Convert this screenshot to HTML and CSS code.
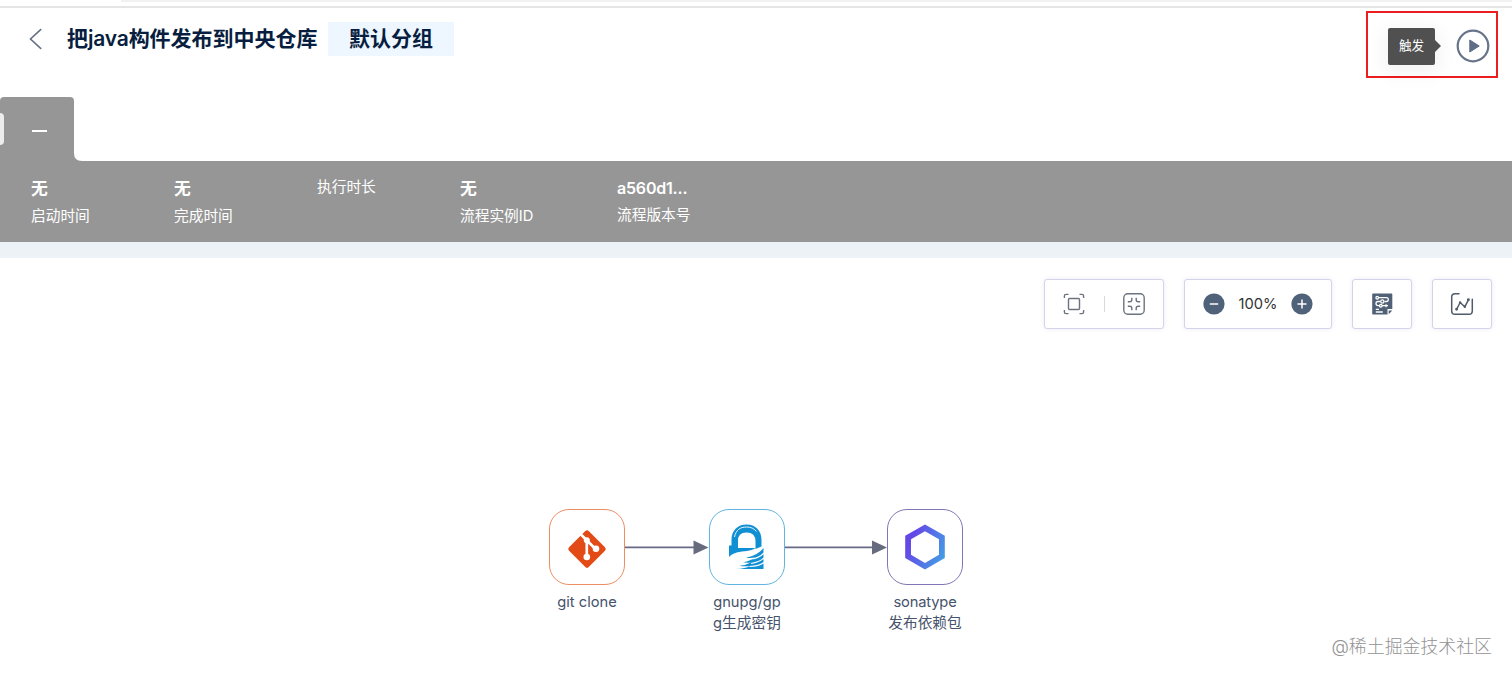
FILE: index.html
```html
<!DOCTYPE html>
<html lang="zh-CN">
<head>
<meta charset="utf-8">
<title>把java构件发布到中央仓库</title>
<link rel="stylesheet" href="styles.css">
</head>
<body>
<div class="browser-edge"><div class="browser-tab"></div></div>
<header class="header">
  <svg class="back" width="14" height="22" viewBox="0 0 14 22"><path d="M12.2 1.2 1.5 11l10.700 9.800" /></svg>
  <h1 class="title">把<span class="latin">java</span>构件发布到中央仓库</h1>
  <span class="group">默认分组</span>
  <div class="trigger">
    <span class="tooltip">触发</span>
    <svg class="play" width="34" height="34" viewBox="0 0 34 34"><circle cx="17" cy="17" r="15.300"/><path d="M13.800 11v12l9.400-6z"/></svg>
  </div>
</header>
<section class="summary">
  <div class="tab"><i class="handle"></i><i class="dash"></i><svg class="fillet" width="8" height="8" viewBox="0 0 8 8"><path d="M0 0v8h8Q0 8 0 0z"/></svg></div>
  <div class="info">
    <div class="item"><b>无</b><span>启动时间</span></div>
    <div class="item"><b>无</b><span>完成时间</span></div>
    <div class="item single"><span>执行时长</span></div>
    <div class="item wide"><b>无</b><span>流程实例ID</span></div>
    <div class="item version"><b>a560d1...</b><span>流程版本号</span></div>
  </div>
</section>
<main class="canvas">
  <div class="toolbar">
    <div class="tool pair">
      <svg width="22" height="22" viewBox="0 0 22 22" class="line"><rect x="5.500" y="5.500" width="11" height="11" rx="1"/><path d="M1.400 5V3q0-1.600 1.600-1.600h2.500M16.500 1.400H19q1.600 0 1.600 1.600v2M20.600 17v2q0 1.600-1.600 1.600h-2.500M5.500 20.600H3Q1.400 20.600 1.400 19v-2"/></svg>
      <i class="sep"></i>
      <svg width="22" height="22" viewBox="0 0 22 22" class="line"><rect x=".8" y=".8" width="20.400" height="20.400" rx="4"/><path d="M8.800 4.800v2q0 2-2 2h-2M13.200 4.800v2q0 2 2 2h2M4.800 13.200h2q2 0 2 2v2M17.200 13.200h-2q-2 0-2 2v2"/></svg>
    </div>
    <div class="tool zoom">
      <svg width="22" height="22" viewBox="0 0 22 22" class="disc"><circle cx="11" cy="11" r="10.600"/><path d="M6.800 11h8.400"/></svg>
      <span>100%</span>
      <svg width="22" height="22" viewBox="0 0 22 22" class="disc"><circle cx="11" cy="11" r="10.600"/><path d="M6.500 11h9M11 6.500v9"/></svg>
    </div>
    <div class="tool">
      <svg width="22" height="22" viewBox="0 0 22 22" class="sheet"><path class="page" d="M2 .4h18.500q.8 0 .8.800V16h-4.800v5.600H2q-.8 0-.8-.8V1.200q0-.8.8-.8z"/><path class="page" d="M17.700 17.400h3.600l-3.600 3.800z"/><circle cx="6.200" cy="4.700" r="1.300"/><path d="M7.500 4.700h8q1.800 0 1.800 1.900T15.500 8.500h-2M9 8.500H7q-2 0-2 2.100t2 2.100h1"/><circle cx="11.300" cy="8.500" r="1.600"/><circle cx="9.800" cy="12.700" r="1.300"/><path d="M11 12.700h6M15 11.200v3M4.800 16.300h3.200M4.800 19h7"/></svg>
    </div>
    <div class="tool">
      <svg width="24" height="24" viewBox="0 0 24 24" class="chart"><path d="M9 1.700H5Q1.700 1.700 1.700 5v14q0 3.300 3.300 3.300h14q3.300 0 3.300-3.300V7.200"/><path d="m6.800 17 3.300-6.500 4.700 4.300 3.600-7"/><circle cx="6.600" cy="17.200" r=".7"/><circle cx="10.100" cy="10.500" r=".5"/><circle cx="14.800" cy="14.800" r=".5"/><circle cx="18.400" cy="7.800" r=".7"/></svg>
    </div>
  </div>
  <svg class="links" width="300" height="20" viewBox="0 0 300 20">
    <path class="wire" d="M0 10.400h70M160 10.400h88"/>
    <path class="arrow" d="M69.500 3.400v14l15-7zM248 3.400v14l15-7z"/>
  </svg>
  <div class="node git">
    <div class="box"><svg width="40" height="40" viewBox="0 0 40 40"><rect x="6.100" y="6.100" width="27.800" height="27.800" rx="2.400" transform="rotate(45 20 20)" fill="#e24a16"/><g stroke="#fff" fill="none" stroke-width="2.700"><path d="m13 4.500 6.700 6.700M19.800 11v17M20 11.500l8.500 8.500"/></g><g fill="#fff"><circle cx="19.800" cy="11.300" r="3"/><circle cx="19.800" cy="28" r="3.300"/><circle cx="29" cy="19.800" r="3.300"/></g></svg></div>
    <p>git clone</p>
  </div>
  <div class="node gpg">
    <div class="box"><svg width="38" height="48" viewBox="0 0 38 48"><path fill="#118fd3" d="M3.500 24V17C3.500 7.500 9.500 1.500 18.500 1.500S33.500 7.500 33.500 17v6.500l-6 2.500v-7.500Q27.500 9.500 18.500 9.500T10 18.500V24z"/><path d="M6.500 14C8 7 12 4 18.500 4q6.500 0 10 4.500" fill="none" stroke="#fff" stroke-width=".9"/><path fill="#118fd3" d="M1 22.500h9v2.500h17.500q-3 2.500-13.500 3.500Q4.500 29.500 1 34z"/><path fill="#118fd3" d="M35.500 25v21H8q9.500-.3 14-3-6 .6-10.500-.3 7-.7 11.500-3.200-4 .6-8-.2 8-1.500 12-4.800-4 .8-9 .3Q30.500 32 35.500 25z"/><path d="M36 30q-4.500 4.800-11.500 6M36 35q-4.500 4.300-13 5.500M36 39.500q-4.500 3.500-14.500 4" fill="none" stroke="#fff" stroke-width="1.200"/></svg></div>
    <p>gnupg/gp<br>g生成密钥</p>
  </div>
  <div class="node sona">
    <div class="box"><svg width="42" height="46" viewBox="0 0 42 46"><defs><linearGradient id="hex" x1="0" y1=".25" x2="1" y2=".75"><stop offset=".15" stop-color="#6547e8"/><stop offset="1" stop-color="#429fe4"/></linearGradient></defs><path fill="url(#hex)" fill-rule="evenodd" d="M21 .5 40.800 11.700v22.400L21 45.400 1.200 34.100V11.700zM21 7.200 7 15.200v15.500l14 8.200 14-8.200V15.200z"/></svg></div>
    <p><span class="snug">sonatype</span><br>发布依赖包</p>
  </div>
  <div class="watermark">@稀土掘金技术社区</div>
</main>
</body>
</html>
```
FILE: styles.css
```css
* { box-sizing: border-box; }
body {
  margin: 0;
  height: 677px;
  overflow: hidden;
  display: flex;
  flex-direction: column;
  background: #fff;
  color: #081e40;
  font-family: Inter, "Noto Sans CJK SC", sans-serif;
}
svg { display: block; flex: none; }
.browser-edge { height: 8px; border-bottom: 2px solid #e5e5e6; padding-left: 121px; flex: none; }
.browser-tab { height: 2px; background: #f1f1f2; }

.header { height: 89px; flex: none; display: flex; align-items: flex-start; padding: 3px 14px 0 29px; }
.back { margin-top: 17px; fill: none; stroke: #667085; stroke-width: 1.6; }
.title { margin: 11px 0 0 24px; font: 600 21px/30px "Noto Sans CJK SC", sans-serif; white-space: nowrap; width: 261px; }
.latin { font-family: Inter, sans-serif; letter-spacing: -.2px; line-height: 1; }
.group { margin-top: 11px; width: 126px; height: 34px; background: #eef6ff; text-align: center; font: 600 21px/30px "Noto Sans CJK SC", sans-serif; }
.trigger { margin-left: auto; width: 132px; height: 67px; border: 2px solid #ec1d20; display: flex; align-items: center; padding: 3px 6px 0 20px; justify-content: space-between; }
.tooltip { position: relative; width: 47px; height: 37px; border-radius: 2px; background: #505050; color: #fff; font-size: 12.6px; line-height: 35px; text-align: center; box-shadow: 0 5px 20px 4px rgba(0,0,0,.05); }
.tooltip::after { content: ""; position: absolute; left: 46px; top: 11px; border: 7px solid transparent; border-left-color: #505050; border-right: 0; }
.play { fill: none; stroke: #667389; stroke-width: 2.2; }
.play path { fill: #5d6e86; stroke: #5d6e86; stroke-width: 1; stroke-linejoin: round; }

.summary { flex: none; }
.tab { position: relative; width: 74px; height: 64px; background: #969696; border-radius: 4px 4px 0 0; display: flex; align-items: center; }
.handle { width: 4px; height: 32px; background: #ececec; border-radius: 0 4px 4px 0; }
.dash { width: 15px; height: 2px; margin: 4px 0 0 28px; background: #fff; }
.fillet { position: absolute; left: 74px; bottom: 0; fill: #969696; }
.info { height: 81px; background: #969696; color: #fff; display: flex; padding: 16px 0 0 31px; }
.item { width: 143px; display: flex; flex-direction: column; font-size: 14.7px; line-height: 22px; white-space: nowrap; }
.item b { font-size: 16.8px; font-weight: 600; line-height: 24px; margin-bottom: 4px; }
.item.single { margin-top: -1px; }
.item.wide { width: 157px; }
.version b { font-size: 16px; letter-spacing: -.2px; line-height: 23px; }

.canvas { position: relative; flex: 1; border-top: 16px solid #edf2f6; display: flex; flex-direction: column; }
.toolbar { display: flex; justify-content: flex-end; gap: 20px; padding: 21px 20px 0 0; }
.tool { width: 60px; height: 50px; border: 1.5px solid #d3d4ea; border-radius: 3px; box-shadow: 0 0 4px rgba(150,150,210,.2); display: flex; align-items: center; justify-content: center; background: #fff; }
.pair { width: 120px; justify-content: space-between; padding: 0 18px; }
.zoom { width: 148px; justify-content: space-between; padding: 0 18px; font-size: 14.7px; color: #333; }
.sep { width: 1px; height: 16px; background: #d8d9df; }
.line { fill: none; stroke: #6b7380; stroke-width: 1.4; }
.disc { fill: #50627a; stroke: none; }
.disc path { stroke: #fff; stroke-width: 1.5; }
.sheet { fill: none; stroke: #fff; stroke-width: 1.3; }
.sheet .page { fill: #4f6077; stroke: none; }
.chart { fill: none; stroke: #505b6b; stroke-width: 1.5; stroke-linecap: round; stroke-linejoin: round; }
.chart circle { fill: #505b6b; }

.links { position: absolute; left: 624px; top: 279px; }
.wire { stroke: #686b88; stroke-width: 1.6; }
.arrow { fill: #666b7e; }
.node { position: absolute; top: 251px; width: 78px; display: flex; flex-direction: column; align-items: center; color: #46536c; }
.git { left: 548px; }
.gpg { left: 708px; }
.sona { left: 886px; }
.box { width: 76px; height: 76px; border: 1.3px solid #ee8d62; border-radius: 20px; display: flex; align-items: center; justify-content: center; }
.git svg { margin-top: 4px; }
.gpg .box { border-color: #61b4e0; }
.sona .box { border-color: #8375b5; }
.node p { margin: 7px 0 0; font-size: 14.7px; line-height: 21px; text-align: center; white-space: nowrap; }
.snug { letter-spacing: -.15px; }
.watermark { position: absolute; right: 20px; bottom: 17px; font-size: 17.9px; line-height: 26px; color: #929292; font-weight: 300; }
```
